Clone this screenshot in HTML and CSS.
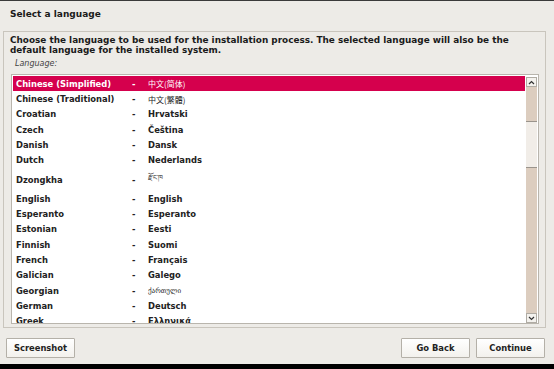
FILE: index.html
```html
<!DOCTYPE html>
<html>
<head>
  <link rel="stylesheet" href="styles.css">
</head>
<body>
  <div class="window">
    <h1 class="title">Select a language</h1>

    <div class="panel">
      <p class="intro">Choose the language to be used for the installation process. The selected language will also be the default language for the installed system.</p>
      <p class="field-label">Language:</p>

      <div class="listbox">
        <ul class="languages">
          <li class="row selected"><span class="name">Chinese (Simplified)</span><span class="dash">-</span><span class="native cjk">中文(简体)</span></li>
          <li class="row"><span class="name">Chinese (Traditional)</span><span class="dash">-</span><span class="native cjk">中文(繁體)</span></li>
          <li class="row"><span class="name">Croatian</span><span class="dash">-</span><span class="native">Hrvatski</span></li>
          <li class="row"><span class="name">Czech</span><span class="dash">-</span><span class="native">Čeština</span></li>
          <li class="row"><span class="name">Danish</span><span class="dash">-</span><span class="native">Dansk</span></li>
          <li class="row"><span class="name">Dutch</span><span class="dash">-</span><span class="native">Nederlands</span></li>
          <li class="row tall"><span class="name">Dzongkha</span><span class="dash">-</span><span class="native small">རྫོང་ཁ</span></li>
          <li class="row"><span class="name">English</span><span class="dash">-</span><span class="native">English</span></li>
          <li class="row"><span class="name">Esperanto</span><span class="dash">-</span><span class="native">Esperanto</span></li>
          <li class="row"><span class="name">Estonian</span><span class="dash">-</span><span class="native">Eesti</span></li>
          <li class="row"><span class="name">Finnish</span><span class="dash">-</span><span class="native">Suomi</span></li>
          <li class="row"><span class="name">French</span><span class="dash">-</span><span class="native">Français</span></li>
          <li class="row"><span class="name">Galician</span><span class="dash">-</span><span class="native">Galego</span></li>
          <li class="row"><span class="name">Georgian</span><span class="dash">-</span><span class="native small">ქართული</span></li>
          <li class="row"><span class="name">German</span><span class="dash">-</span><span class="native">Deutsch</span></li>
          <li class="row"><span class="name">Greek</span><span class="dash">-</span><span class="native">Ελληνικά</span></li>
        </ul>

        <div class="scrollbar">
          <div class="arrow">
            <svg width="7" height="5" viewBox="0 0 7 5"><path d="M1 4 L3.5 1.5 L6 4" fill="none" stroke="#333" stroke-width="1.2"/></svg>
          </div>
          <div class="track">
            <div class="thumb"></div>
          </div>
          <div class="arrow">
            <svg width="7" height="5" viewBox="0 0 7 5"><path d="M1 1 L3.5 3.5 L6 1" fill="none" stroke="#333" stroke-width="1.2"/></svg>
          </div>
        </div>
      </div>
    </div>

    <div class="buttons">
      <button class="btn">Screenshot</button>
      <div class="spacer"></div>
      <button class="btn">Go Back</button>
      <button class="btn">Continue</button>
    </div>
  </div>
  <div class="bottom-bar"></div>
</body>
</html>
```

FILE: styles.css
```css
body {
  margin: 0;
  background-color: #000;
  font-family: "DejaVu Sans", "Noto Sans CJK SC", sans-serif;
  color: #1a1a1a;
}
.window {
  height: 363px;
  background-color: #edebe7;
  border-top: 1px solid #3a3a3a;
  display: flex;
  flex-direction: column;
  overflow: hidden;
}
.title {
  margin: 0;
  padding: 7px 10px 0;
  height: 23px;
  font-size: 9px;
  font-weight: bold;
  line-height: 12px;
}
.panel {
  margin: 0 8px 0 3px;
  height: 297px;
  border: 1px solid #c9c5bd;
  box-sizing: border-box;
  padding: 4px 6px 3px 6px;
  display: flex;
  flex-direction: column;
}
.intro {
  margin: 0;
  padding-right: 22px;
  font-size: 8.9px;
  font-weight: bold;
  line-height: 9.5px;
}
.field-label {
  margin: 4px 0 0 5px;
  font-size: 8px;
  font-style: italic;
  color: #444;
  line-height: 10px;
}
.listbox {
  margin: 5px 0 0 1px;
  flex: 1;
  background-color: #fff;
  border: 1px solid #b9b5ad;
  display: flex;
  padding: 1px 0 0 1px;
  overflow: hidden;
}
.languages {
  list-style: none;
  margin: 0;
  padding: 0;
  flex: 1;
  overflow: hidden;
}
.row {
  height: 15.35px;
  display: flex;
  align-items: center;
  font-size: 8.4px;
  font-weight: bold;
  color: #222;
}
.row.tall {
  height: 23px;
}
.row.selected {
  background-color: #d5004d;
  color: #fff;
}
.name {
  width: 116px;
  padding-left: 3px;
}
.dash {
  width: 16px;
}
.native.cjk {
  font-weight: normal;
  font-family: "Noto Sans CJK SC", sans-serif;
  font-size: 8px;
}
.native.small {
  font-weight: normal;
  font-size: 7px;
}
.scrollbar {
  width: 11px;
  margin: 1px 1px 0 1px;
  display: flex;
  flex-direction: column;
  background-color: #dccdbf;
}
.arrow {
  height: 10px;
  background-color: #f4f2ee;
  border: 1px solid #b0aca4;
  box-sizing: border-box;
  display: flex;
  align-items: center;
  justify-content: center;
}
.track {
  flex: 1;
  padding-top: 34px;
}
.thumb {
  height: 45px;
  background-color: #f1ede8;
  border-top: 1px solid #9a948c;
  border-bottom: 1px solid #9a948c;
}
.buttons {
  display: flex;
  gap: 6px;
  padding: 10px 9px 0 6px;
}
.spacer {
  flex: 1;
}
.btn {
  height: 20px;
  width: 69px;
  padding: 0;
  font-family: "DejaVu Sans", sans-serif;
  font-size: 8.4px;
  font-weight: bold;
  color: #222;
  background: linear-gradient(#ffffff, #f3f1ed);
  border: 1px solid #b4b0a8;
  border-radius: 1px;
}
.bottom-bar {
  height: 5px;
  background-color: #000;
}
```
